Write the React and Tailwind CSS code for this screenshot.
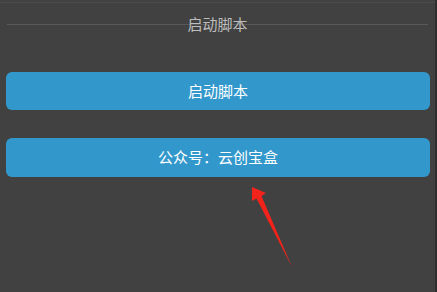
import React from "react";

function App() {
  return (
    <div className="relative flex h-[292px] w-[437px] overflow-hidden bg-[#414141] font-['Noto_Sans_CJK_SC','Noto_Sans',sans-serif]">
      <div className="flex flex-1 flex-col">
        {/* top hairline */}
        <div className="mt-[2px] h-px w-full bg-[#4b4b4b]" />

        {/* section title over divider */}
        <div className="mt-[12px] grid h-[18px] items-center px-[7px]">
          <div className="[grid-area:1/1] h-px w-full bg-[#595959]" />
          <div className="[grid-area:1/1] text-center text-[15px] leading-[18px] text-[#bdbdbd]">
            启动脚本
          </div>
        </div>

        <div className="mt-[39px] flex flex-col gap-[28px] pl-[6px] pr-[5px]">
          <button className="h-[38px] w-full rounded-[6px] bg-[#3298cc] text-[15px] text-white">
            启动脚本
          </button>
          <button className="h-[39px] w-full rounded-[6px] bg-[#3298cc] text-[15px] text-white">
            公众号：云创宝盒
          </button>
        </div>
      </div>
      <div className="w-[2px] bg-[#2e2e2e]" />

      {/* annotation arrow */}
      <svg className="absolute left-0 top-0" width="437" height="292" viewBox="0 0 437 292">
        <path
          d="M252 187 L266 193 L261.5 196 L292 267 L256.5 198.5 L252 201 Z"
          fill="#f2231b"
        />
      </svg>
    </div>
  );
}

export default App;
